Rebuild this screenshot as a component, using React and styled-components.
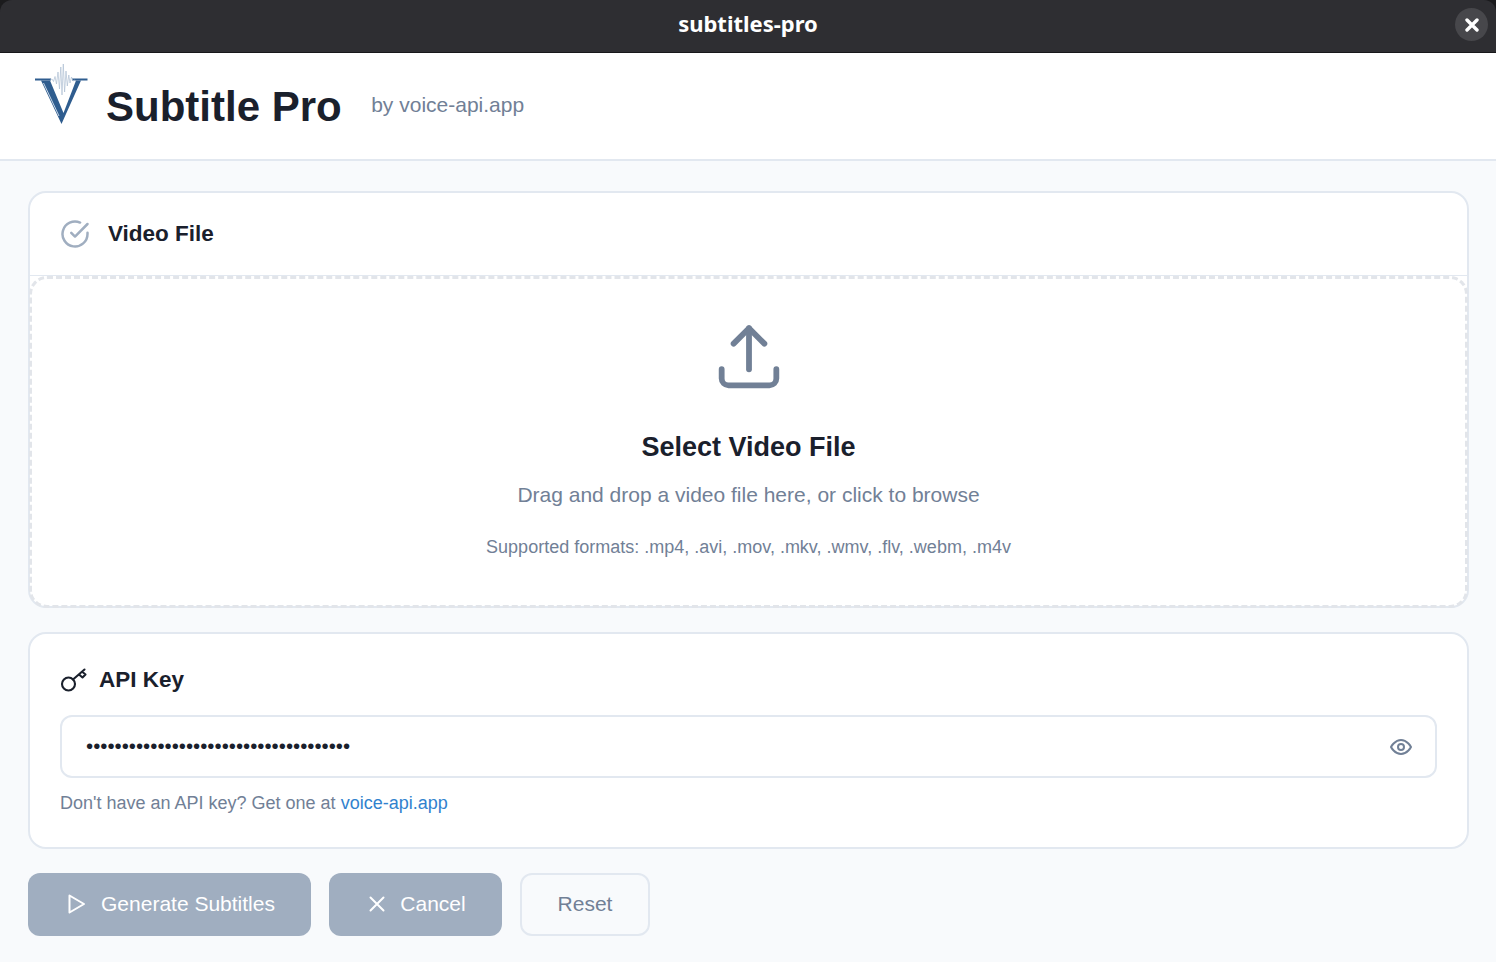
import React from "react";
import styled, { createGlobalStyle } from "styled-components";

const Global = createGlobalStyle`
  html, body { margin: 0; padding: 0; height: 100%; }
  body { background: #f8fafc; font-family: "Liberation Sans", Arial, sans-serif; overflow: hidden; }
  * { box-sizing: border-box; }
`;

const Page = styled.div`
  width: 1496px;
  height: 962px;
  display: flex;
  flex-direction: column;
  background: #f8fafc;
`;
const TitleFrame = styled.div`
  flex: none;
  background: #1b1b1d;
`;
const TitleBar = styled.div`
  height: 53px;
  background: #2e2e32;
  border-bottom: 1px solid #17171a;
  border-radius: 12px 12px 0 0;
  display: flex;
  align-items: center;
  justify-content: center;
  padding-bottom: 6px;
  position: relative;
  color: #fff;
  font: 700 22px "Noto Sans", sans-serif;
`;
const CloseCircle = styled.div`
  position: absolute;
  right: 8px;
  top: 8px;
  width: 33px;
  height: 33px;
  border-radius: 50%;
  background: #47474b;
  display: flex;
  align-items: center;
  justify-content: center;
`;
const AppHeader = styled.header`
  height: 108px;
  flex: none;
  background: #fff;
  border-bottom: 2px solid #e2e8f0;
  padding: 0 0 0 32px;
  display: flex;
  align-items: center;
`;
const Logo = styled.svg`
  width: 58px;
  height: 66px;
  margin: -22px 16px 0 0;
  flex: none;
`;
const AppName = styled.h1`
  margin: 2px 29.5px 0 0;
  font-size: 42px;
  font-weight: 700;
  color: #1a202c;
`;
const ByLine = styled.span`
  margin-top: -2px;
  font-size: 21px;
  color: #718096;
`;
const Content = styled.main`
  flex: 1;
  padding: 30px 27px 0 28px;
  display: flex;
  flex-direction: column;
`;
const Card = styled.section`
  background: #fff;
  border: 2px solid #e2e8f0;
  border-radius: 18px;
`;
const FileHeader = styled.div`
  height: 83px;
  padding: 0 0 1px 30px;
  display: flex;
  align-items: center;
  gap: 18px;
  border-bottom: 1px solid #e2e8f0;
`;
const SectionTitle = styled.h2`
  margin: 0;
  font-size: 22.5px;
  font-weight: 700;
  color: #1a202c;
`;
const DropZone = styled.div`
  height: 332px;
  margin: 0 -1px -2px;
  border: 3px dashed #e2e5ea;
  border-radius: 18px;
  display: flex;
  flex-direction: column;
  align-items: center;
  text-align: center;
  padding-top: 39px;
`;
const DropTitle = styled.h3`
  margin: 31px 0 0;
  font-size: 27px;
  font-weight: 700;
  color: #1a202c;
  line-height: 32px;
`;
const DropText = styled.p`
  margin: 19px 0 0;
  font-size: 21px;
  line-height: 26px;
  color: #718096;
`;
const DropFormats = styled.p`
  margin: 28px 0 0;
  font-size: 18px;
  line-height: 22px;
  color: #718096;
`;
const KeyCard = styled(Card)`
  margin-top: 24px;
  height: 217px;
  padding: 29px 30px 0 30px;
`;
const KeyHeading = styled.div`
  display: flex;
  align-items: center;
  gap: 12px;
  height: 34px;
`;
const InputBox = styled.div`
  margin-top: 18px;
  height: 63px;
  border: 2px solid #e2e8f0;
  border-radius: 12px;
  padding: 0 22px 0 24px;
  display: flex;
  align-items: center;
  justify-content: space-between;
`;
const MaskedValue = styled.input`
  border: none;
  outline: none;
  flex: 1;
  background: transparent;
  color: #1a202c;
  font: 400 20.4px "Liberation Sans", Arial, sans-serif;
  padding: 0;
`;
const Help = styled.p`
  margin: 14px 0 0;
  font-size: 18px;
  line-height: 22px;
  color: #718096;
`;
const HelpLink = styled.a`
  color: #3182ce;
  text-decoration: none;
`;
const Actions = styled.div`
  margin-top: 24px;
  display: flex;
  gap: 18px;
`;
const Button = styled.button`
  height: 63px;
  padding: 0 0 2px ${(p) => (p.$ghost ? 0 : 2)}px;
  border-radius: 12px;
  border: ${(p) => (p.$ghost ? "2px solid #e2e8f0" : "none")};
  background: ${(p) => (p.$ghost ? "transparent" : "#a0aec0")};
  color: ${(p) => (p.$ghost ? "#718096" : "#fff")};
  font: 400 21px "Liberation Sans", Arial, sans-serif;
  white-space: nowrap;
  display: flex;
  align-items: center;
  gap: 13px;
  width: ${(p) => p.$w}px;
  justify-content: center;
`;

export default function App() {
  return (
    <Page>
      <Global />
      <TitleFrame>
        <TitleBar>
          subtitles-pro
          <CloseCircle>
            <svg width="14" height="14" viewBox="0 0 14 14" fill="none" stroke="#fff" strokeWidth="3.4" strokeLinecap="round">
              <path d="M2 2l10 10M12 2L2 12" />
            </svg>
          </CloseCircle>
        </TitleBar>
      </TitleFrame>
      <AppHeader>
        <Logo viewBox="0 0 58 66" fill="none">
          <path d="M3 16.500H19V18.500H3zM40 16.500H55.500V18.500H40z" fill="#2f5d8f" />
          <path d="M9 18.500H18L31.500 51 44 18.500H49L29.500 62z" fill="#2f5d8f" />
          <path d="M11.500 21 27 54" stroke="#c9d7e6" strokeWidth="1" />
          <path
            d="M18 18 20 17 21.500 19.500 23 14.500 24.500 22 26 10 27.500 27 28.800 5 30 33 31.300 2 32.600 30 34 9 35.300 24 36.800 13 38 21 39.500 15 41 19 43 18"
            stroke="#aebfd2"
            strokeWidth="0.700"
            strokeLinejoin="round"
          />
        </Logo>
        <AppName>Subtitle Pro</AppName>
        <ByLine>by voice-api.app</ByLine>
      </AppHeader>
      <Content>
        <Card>
          <FileHeader>
            <svg width="30" height="30" viewBox="0 0 24 24" fill="none" stroke="#a0aec0" strokeWidth="2" strokeLinecap="round" strokeLinejoin="round">
              <path d="M22 11.080V12a10 10 0 1 1-5.930-9.140" />
              <path d="M22 4 12 14.010l-3-3" />
            </svg>
            <SectionTitle>Video File</SectionTitle>
          </FileHeader>
          <DropZone>
            <svg width="82" height="82" viewBox="0 0 24 24" fill="none" stroke="#718096" strokeWidth="1.700" strokeLinecap="round" strokeLinejoin="round">
              <path d="M4 15v2.700a2 2 0 0 0 2 2h12a2 2 0 0 0 2-2V15" />
              <path d="M16.500 7.500 12 3 7.500 7.500" />
              <path d="M12 3v12" />
            </svg>
            <DropTitle>Select Video File</DropTitle>
            <DropText>Drag and drop a video file here, or click to browse</DropText>
            <DropFormats>Supported formats: .mp4, .avi, .mov, .mkv, .wmv, .flv, .webm, .m4v</DropFormats>
          </DropZone>
        </Card>
        <KeyCard>
          <KeyHeading>
            <svg width="27" height="27" viewBox="0 0 27 27" fill="none" stroke="#1a202c" strokeWidth="2.100" strokeLinecap="round" strokeLinejoin="round">
              <circle cx="8.500" cy="17" r="6.500" />
              <path d="M13 12.500 24.500 2.500M19 7.500l3.500 3 3-3-3-2.500" />
            </svg>
            <SectionTitle>API Key</SectionTitle>
          </KeyHeading>
          <InputBox>
            <MaskedValue type="password" readOnly value="sk-voice-api-app-0123456789abcdefghij" />
            <svg width="24" height="24" viewBox="0 0 24 24" fill="none" stroke="#718096" strokeWidth="2" strokeLinecap="round" strokeLinejoin="round">
              <path d="M2 12s3.600-7 10-7 10 7 10 7-3.600 7-10 7-10-7-10-7z" />
              <circle cx="12" cy="12" r="3" />
            </svg>
          </InputBox>
          <Help>
            Don't have an API key? Get one at <HelpLink href="#">voice-api.app</HelpLink>
          </Help>
        </KeyCard>
        <Actions>
          <Button $w={283}>
            <svg width="22" height="22" viewBox="0 0 22 22" fill="none" stroke="#fff" strokeWidth="2" strokeLinejoin="round" strokeLinecap="round">
              <path d="M3.500 2.500 18 11 3.500 19.500z" />
            </svg>
            Generate Subtitles
          </Button>
          <Button $w={173}>
            <svg width="20" height="20" viewBox="0 0 20 20" fill="none" stroke="#fff" strokeWidth="2" strokeLinecap="round">
              <path d="M3.500 3.500l13 13M16.500 3.500l-13 13" />
            </svg>
            Cancel
          </Button>
          <Button $ghost $w={130}>Reset</Button>
        </Actions>
      </Content>
    </Page>
  );
}
